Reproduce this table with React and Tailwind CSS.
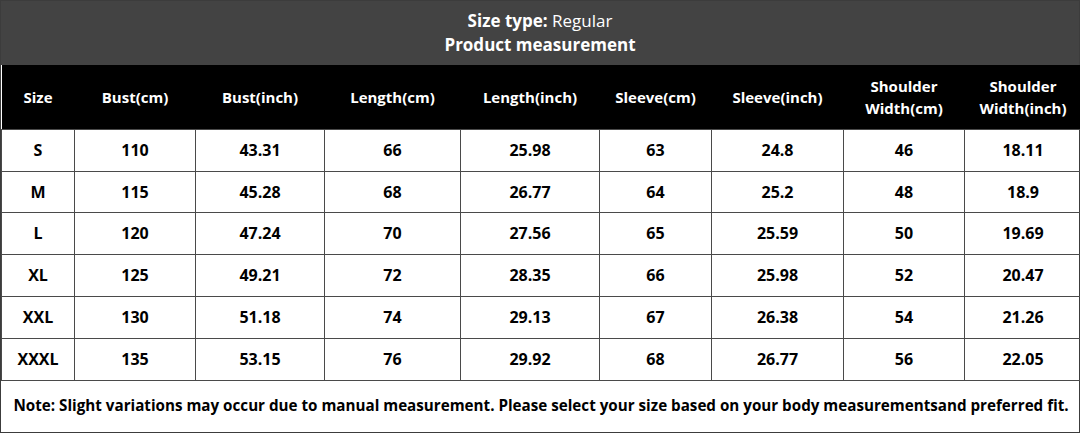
const columns = [
  { label: "Size", width: 73 },
  { label: "Bust(cm)", width: 121 },
  { label: "Bust(inch)", width: 129 },
  { label: "Length(cm)", width: 136 },
  { label: "Length(inch)", width: 139 },
  { label: "Sleeve(cm)", width: 112 },
  { label: "Sleeve(inch)", width: 132 },
  { label: ["Shoulder", "Width(cm)"], width: 121 },
  { label: ["Shoulder", "Width(inch)"], width: 117 },
];

const rows = [
  ["S", "110", "43.31", "66", "25.98", "63", "24.8", "46", "18.11"],
  ["M", "115", "45.28", "68", "26.77", "64", "25.2", "48", "18.9"],
  ["L", "120", "47.24", "70", "27.56", "65", "25.59", "50", "19.69"],
  ["XL", "125", "49.21", "72", "28.35", "66", "25.98", "52", "20.47"],
  ["XXL", "130", "51.18", "74", "29.13", "67", "26.38", "54", "21.26"],
  ["XXXL", "135", "53.15", "76", "29.92", "68", "26.77", "56", "22.05"],
];

const rowHeights = [42, 41, 42, 42, 42, 42];

export default function App() {
  return (
    <div
      className="w-[1080px] h-[433px] bg-white text-black"
      style={{ fontFamily: '"Open Sans", "Noto Sans", sans-serif' }}
    >
      <div className="border border-[#3c3c3c] h-[433px] flex flex-col">
        <div className="h-[64px] bg-[#434343] text-white flex flex-col items-center justify-center text-[17px] leading-[24px]">
          <p>
            <span className="font-bold">Size type:</span> Regular
          </p>
          <p className="font-bold">Product measurement</p>
        </div>
        <table className="border-collapse table-fixed w-full">
          <colgroup>
            {columns.map((c, i) => (
              <col key={i} style={{ width: c.width }} />
            ))}
          </colgroup>
          <thead>
            <tr className="h-[64px] bg-black text-white">
              {columns.map((c, i) => (
                <th key={i} className="font-bold text-[15px] leading-[22px] text-center p-0">
                  {Array.isArray(c.label) ? (
                    <>
                      {c.label[0]}
                      <br />
                      {c.label[1]}
                    </>
                  ) : (
                    c.label
                  )}
                </th>
              ))}
            </tr>
          </thead>
          <tbody>
            {rows.map((r, ri) => (
              <tr key={ri} style={{ height: rowHeights[ri] }}>
                {r.map((v, ci) => (
                  <td
                    key={ci}
                    className="border border-[#4a4a4a] text-center font-bold text-[16px] p-0"
                  >
                    {v}
                  </td>
                ))}
              </tr>
            ))}
            <tr className="h-[51px]">
              <td colSpan={9} className="border-t border-[#4a4a4a] px-[12px] text-[15.2px] font-bold text-left whitespace-nowrap">
                Note: Slight variations may occur due to manual measurement. Please select your size based on your body measurementsand preferred fit.
              </td>
            </tr>
          </tbody>
        </table>
      </div>
    </div>
  );
}
